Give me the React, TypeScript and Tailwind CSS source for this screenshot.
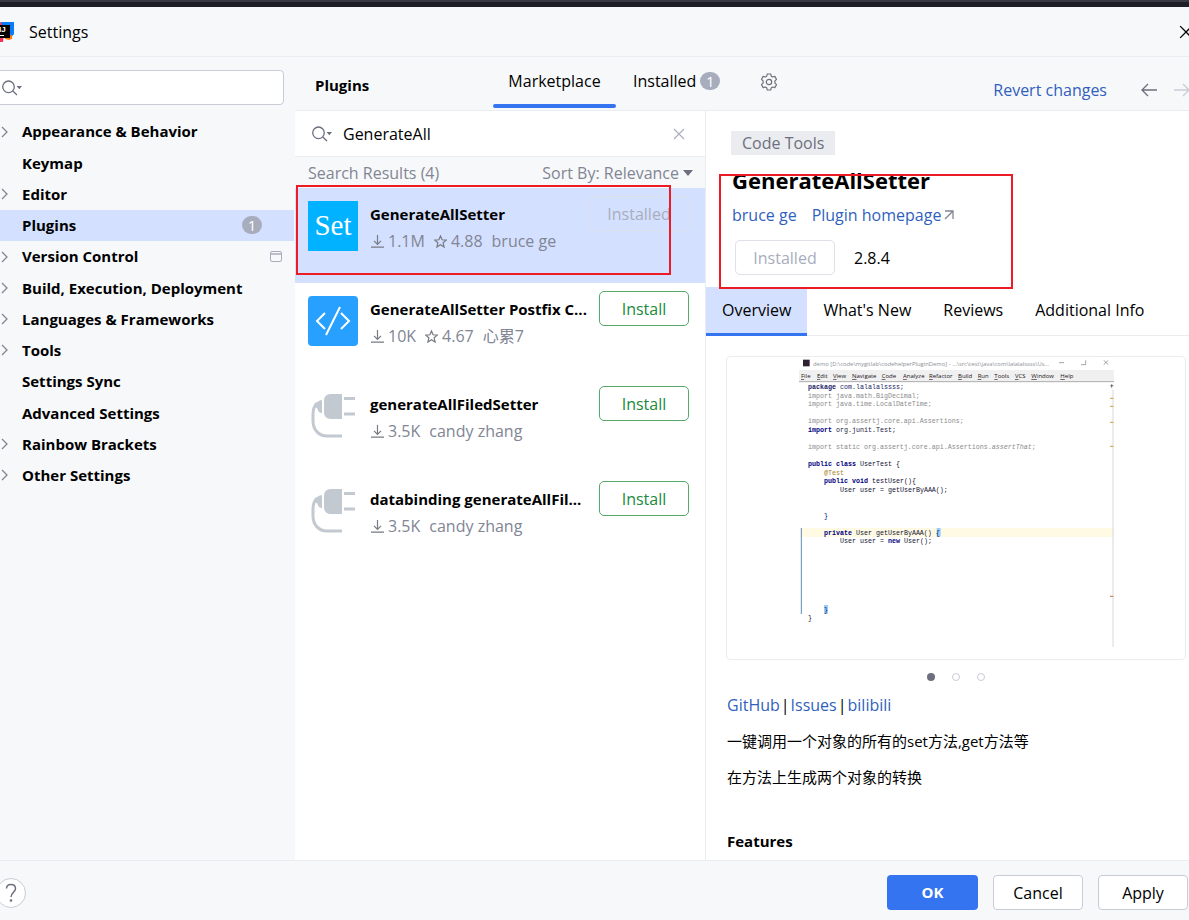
import React, { useState } from 'react';

const categories = [
  { name: 'Appearance & Behavior', expandable: true },
  { name: 'Keymap' },
  { name: 'Editor', expandable: true },
  { name: 'Plugins', badge: 1 },
  { name: 'Version Control', expandable: true, projectLevel: true },
  { name: 'Build, Execution, Deployment', expandable: true },
  { name: 'Languages & Frameworks', expandable: true },
  { name: 'Tools', expandable: true },
  { name: 'Settings Sync' },
  { name: 'Advanced Settings' },
  { name: 'Rainbow Brackets', expandable: true },
  { name: 'Other Settings', expandable: true },
];

const plugins = [
  { name: 'GenerateAllSetter', downloads: '1.1M', rating: '4.88', author: 'bruce ge', logo: 'set', installed: true },
  { name: 'GenerateAllSetter Postfix C...', downloads: '10K', rating: '4.67', author: '心累7', logo: 'code' },
  { name: 'generateAllFiledSetter', downloads: '3.5K', author: 'candy zhang', logo: 'plug' },
  { name: 'databinding generateAllFil...', downloads: '3.5K', author: 'candy zhang', logo: 'plug' },
];

const detailTabs = ['Overview', "What's New", 'Reviews', 'Additional Info'];

const SearchIcon = () => (
  <svg width="20" height="16" viewBox="0 0 20 16" fill="none" className="shrink-0">
    <circle cx="6.5" cy="6.8" r="5.8" stroke="#6c707e" strokeWidth="1.3" />
    <path d="M10.8 11 15 15" stroke="#6c707e" strokeWidth="1.3" />
    <path d="M14.5 6h5.5l-2.7 3.2z" fill="#6c707e" />
  </svg>
);

const IdeLogo = () => (
  <svg width="20" height="20" viewBox="0 0 20 20" className="-ml-[6px] shrink-0">
    <path d="M7 0h13v12l-4 5-9-8z" fill="#087cfa" />
    <path d="M0 3l7-3 3 10-1 10H5L0 16z" fill="#fe315d" />
    <path d="M11 14l7-1v4l-3 1-4-1z" fill="#f97a12" />
    <rect x="3" y="3" width="13" height="13" fill="#000" />
    <text x="5" y="10" fill="#fff" fontSize="8" fontWeight="700" fontFamily="Liberation Sans, sans-serif">IJ</text>
    <path d="M5 13.5h5" stroke="#fff" />
  </svg>
);

const GearIcon = () => (
  <svg width="18" height="18" viewBox="0 0 18 18" fill="none" stroke="#6c707e" strokeWidth="1.2" strokeLinejoin="round">
    <path d="M7.3 1h3.4l.6 2.2 1.3.8 2.2-.6 1.7 2.9-1.6 1.6v2.2l1.6 1.6-1.7 2.9-2.2-.6-1.3.8-.6 2.2H7.3l-.6-2.2-1.3-.8-2.2.6-1.7-2.9 1.6-1.6V7.9L1.5 6.3l1.7-2.9 2.2.6 1.3-.8z" />
    <circle cx="9" cy="9" r="2.7" />
  </svg>
);

const ArrowIcon = ({ forward = false }: { forward?: boolean }) => (
  <svg width="16" height="14" viewBox="0 0 16 14" fill="none" stroke={forward ? '#c9ccd6' : '#6c707e'} strokeWidth="1.3" className="shrink-0">
    <path d={forward ? 'M0 7h15M9 1l6 6-6 6' : 'M16 7H1M7 1 1 7l6 6'} />
  </svg>
);

const CrossIcon = ({ size, color }: { size: number; color: string }) => (
  <svg width={size} height={size} viewBox="0 0 12 12" fill="none" stroke={color} strokeWidth="1.1" className="shrink-0">
    <path d="M1 1l10 10M11 1 1 11" />
  </svg>
);

const DownloadIcon = () => (
  <svg width="13" height="13" viewBox="0 0 13 13" fill="none" stroke="#767a82" strokeWidth="1.2">
    <path d="M6.5 0v9M3 5.8l3.5 3.5L10 5.8M0 12.2h13" />
  </svg>
);

const StarIcon = () => (
  <svg width="13" height="13" viewBox="0 0 13 13" fill="none" stroke="#767a82" strokeWidth="1.2">
    <path d="M6.5 1l1.6 3.8 4.2.3-3.2 2.7 1 4.2-3.6-2.3L2.9 12l1-4.2L.7 5.1l4.2-.3z" />
  </svg>
);

const CountBadge = ({ count }: { count: number }) => (
  <span className="flex h-[18px] w-5 items-center justify-center rounded-full bg-[#a8adbd] text-[15px] leading-none text-white">
    {count}
  </span>
);

const PluginLogo = ({ kind }: { kind: string }) => {
  if (kind === 'set') {
    return (
      <div className="flex h-[50px] w-[50px] shrink-0 items-center justify-center bg-[#00b2ff] font-['Liberation_Serif',serif] text-[29px] text-white">
        Set
      </div>
    );
  }
  if (kind === 'code') {
    return (
      <svg width="50" height="50" viewBox="0 0 50 50" fill="none" className="shrink-0">
        <rect width="50" height="50" rx="4" fill="#28a0ff" />
        <path d="M17 17 9 25l8 8M33 17l8 8-8 8M32 11 18 39" stroke="#fff" strokeWidth="2" />
      </svg>
    );
  }
  return (
    <svg width="50" height="50" viewBox="0 0 50 50" fill="none" className="shrink-0">
      <path d="M34 3H23c-5 0-7 3-7 7v11c0 4 2 7 7 7h11z" fill="#c3c9d0" />
      <path d="M36 7.5h11M36 23h11" stroke="#c3c9d0" strokeWidth="3" />
      <path d="M14 9v13c-3 0-4-2-5-5l-3-1c1-3 4-7 8-7z" fill="#c3c9d0" />
      <path d="M9 12c-3 3-4 6-4 11v7c0 9 6 15 14 15h15" stroke="#c3c9d0" strokeWidth="3" />
    </svg>
  );
};

const menuItems = [
  ['File', 6], ['Edit', 54], ['View', 102], ['Navigate', 159], ['Code', 248], ['Analyze', 312], ['Refactor', 390],
  ['Build', 477], ['Run', 536], ['Tools', 586], ['VCS', 648], ['Window', 697], ['Help', 784],
] as const;

// Preview slide, drawn at three times its displayed size
const EditorPreview = () => (
  <svg viewBox="0 0 945 864" className="block h-auto w-[315px]" fontFamily="Liberation Mono, monospace" fontSize="20">
    <rect x="12" y="2" width="20" height="20" fill="#2e2232" />
    <text x="42" y="20" fill="#8c8f96" fontSize="17.6" fontFamily="Open Sans, sans-serif">
      demo [D:\code\mygitlab\codehelperPluginDemo] - ...\src\test\java\com\lalalalssss\Us...
    </text>
    <path d="M780 11h15M846 17h14V4M914 4l14 13M928 4l-14 13" stroke="#777" strokeWidth="2" fill="none" />
    <rect y="33" width="945" height="34" fill="#f0f0f0" />
    <path d="M0 68h945" stroke="#aaa" strokeWidth="3" />
    <g fontFamily="Open Sans, sans-serif" fontSize="18" fill="#221122">
      {menuItems.map(([label, x]) => (
        <text key={label} x={x} y="58">
          <tspan textDecoration="underline">{label[0]}</tspan>
          {label.slice(1)}
        </text>
      ))}
    </g>
    <rect y="507" x="4" width="938" height="27" fill="#fffae3" />
    <path d="M7 507v258" stroke="#5a8fbb" strokeWidth="3" />
    <rect x="413" y="507" width="12" height="26" fill="#99ccff" />
    <rect x="75" y="738" width="12" height="26" fill="#99ccff" />
    <g fill="#8c8c8c">
      <text x="27" y="90" fill="#222266"><tspan fontWeight="700">package</tspan> com.lalalalssss;</text>
      <text x="27" y="117">import java.math.BigDecimal;</text>
      <text x="27" y="142">import java.time.LocalDateTime;</text>
      <text x="27" y="193">import org.assertj.core.api.Assertions;</text>
      <text x="27" y="219" fill="#222244"><tspan fontWeight="700" fill="#000080">import</tspan> org.junit.Test;</text>
      <text x="27" y="271">import static org.assertj.core.api.Assertions.<tspan fontStyle="italic">assertThat</tspan>;</text>
      <g fill="#111133">
        <text x="27" y="322"><tspan fontWeight="700" fill="#000080">public class</tspan> UserTest {'{'}</text>
        <text x="75" y="347" fill="#a58428">@Test</text>
        <text x="75" y="373"><tspan fontWeight="700" fill="#000080">public void</tspan> testUser(){'{'}</text>
        <text x="123" y="399">User user = getUserByAAA();</text>
        <text x="75" y="476" fill="#000080">{'}'}</text>
        <text x="75" y="527"><tspan fontWeight="700" fill="#000080">private</tspan> User getUserByAAA() {'{'}</text>
        <text x="123" y="553">User user = <tspan fontWeight="700" fill="#000080">new</tspan> User();</text>
        <text x="75" y="758">{'}'}</text>
        <text x="27" y="784">{'}'}</text>
      </g>
    </g>
    <path d="M942 92v772" stroke="#d8d8d8" strokeWidth="3" />
    <path d="M933 118h10M933 142h10M933 190h10M933 262h10" stroke="#d99a2b" strokeWidth="3" />
    <path d="M933 712h10" stroke="#c46a50" strokeWidth="3" />
    <path d="M938 76v10M934 80h9" stroke="#666" strokeWidth="3" />
  </svg>
);

const Sidebar = () => {
  const [selected, setSelected] = useState('Plugins');

  return (
    <aside className="w-[295px] shrink-0 bg-[#f7f8fa] pt-[13px]">
      <label className="mr-[11px] -ml-1 flex h-[35px] items-center rounded border border-[#c9ccd6] bg-white pl-[5px]">
        <SearchIcon />
        <input aria-label="Search settings" className="min-w-0 flex-1 px-2 outline-none" />
      </label>
      <nav className="mt-[11px] mr-px grid h-[375px] auto-rows-fr text-[15px] font-bold">
        {categories.map((category) => (
          <button
            key={category.name}
            onClick={() => setSelected(category.name)}
            className={`flex items-center pr-3 text-left ${selected === category.name ? 'bg-[#d4e0ff]' : ''}`}
          >
            <span className="w-[22px] shrink-0 pl-px">
              {category.expandable && (
                <svg width="8" height="12" viewBox="0 0 8 12" fill="none" stroke="#818594" strokeWidth="1.3">
                  <path d="M1 1l5 5-5 5" />
                </svg>
              )}
            </span>
            <span className="flex-1">{category.name}</span>
            {category.badge && (
              <span className="mr-5 font-normal">
                <CountBadge count={category.badge} />
              </span>
            )}
            {category.projectLevel && (
              <svg width="12" height="11" viewBox="0 0 12 11" fill="none" stroke="#a8adbd">
                <rect x=".5" y=".5" width="11" height="10" rx="1.5" />
                <path d="M1 3h10" strokeWidth="1.5" />
              </svg>
            )}
          </button>
        ))}
      </nav>
    </aside>
  );
};

const PluginsHeader = () => (
  <div className="flex h-[54px] shrink-0 border-b border-[#ebecf0] bg-[#f7f8fa]">
    <h1 className="w-[198px] shrink-0 self-center pt-1 pl-5 text-[15px] font-bold">Plugins</h1>
    <button className="flex w-[123px] shrink-0 flex-col items-center justify-between">
      <span className="pt-3">Marketplace</span>
      <span className="mb-[2px] h-1 w-full rounded-full bg-[#3574f0]" />
    </button>
    <button className="flex h-12 items-center gap-1 pl-[17px]">
      Installed
      <CountBadge count={1} />
    </button>
    <button aria-label="Plugin settings" className="ml-10 h-[50px]">
      <GearIcon />
    </button>
    <div className="-mr-px ml-auto flex items-center pt-3">
      <a href="#" className="text-[#315fbd]">Revert changes</a>
      <button aria-label="Back" className="ml-[34px]">
        <ArrowIcon />
      </button>
      <button aria-label="Forward" className="ml-[17px]" disabled>
        <ArrowIcon forward />
      </button>
    </div>
  </div>
);

const PluginList = () => {
  const [query, setQuery] = useState('GenerateAll');

  return (
    <section className="relative w-[411px] shrink-0 border-r border-[#ebecf0] bg-white">
      <div className="flex h-[46px] items-center border-b border-[#ebecf0] pr-5 pl-[17px]">
        <SearchIcon />
        <input
          aria-label="Search plugins"
          value={query}
          onChange={(e) => setQuery(e.target.value)}
          className="ml-[11px] min-w-0 flex-1 outline-none"
        />
        <button aria-label="Clear search" onClick={() => setQuery('')}>
          <CrossIcon size={12} color="#a8adbd" />
        </button>
      </div>
      <div className="flex h-[31px] items-center justify-between bg-[#f7f8fa] pt-px pr-3 pl-[13px] text-[#818594]">
        <span>Search Results (4)</span>
        <button className="flex items-center gap-1">
          Sort By: Relevance
          <svg width="10" height="6" viewBox="0 0 10 6" fill="#6c707e">
            <path d="M0 0h10L5 6z" />
          </svg>
        </button>
      </div>
      <ul>
        {plugins.map((plugin) => (
          <li
            key={plugin.name}
            className={`flex h-[95px] items-start pr-4 pl-[13px] ${plugin.installed ? 'bg-[#d4e0ff]' : ''}`}
          >
            <div className="pt-[13px]">
              <PluginLogo kind={plugin.logo} />
            </div>
            <div className="min-w-0 flex-1 pt-[14px] pl-3">
              <div className="text-[15px] leading-6 font-bold whitespace-nowrap">{plugin.name}</div>
              <div className="mt-[3px] flex items-center pl-px leading-6 whitespace-nowrap text-[#818594]">
                <DownloadIcon />
                <span className="mr-[9px] ml-1">{plugin.downloads}</span>
                {plugin.rating && (
                  <>
                    <StarIcon />
                    <span className="mr-[9px] ml-1">{plugin.rating}</span>
                  </>
                )}
                <span>{plugin.author}</span>
              </div>
            </div>
            {plugin.installed ? (
              <button disabled className="mt-2 h-[35px] w-[100px] shrink-0 rounded-[5px] border border-[#dfe1e8] text-[#a8adbd]">
                Installed
              </button>
            ) : (
              <button className="mt-2 ml-3 h-[35px] w-[90px] shrink-0 rounded-[5px] border border-[#55a76a] bg-white text-[#208a3c]">
                Install
              </button>
            )}
          </li>
        ))}
      </ul>
      <div className="pointer-events-none absolute top-[74px] left-px h-[90px] w-[375px] border-2 border-[#ed1c24]" />
    </section>
  );
};

const PluginDetails = () => {
  const [tab, setTab] = useState('Overview');

  return (
    <section className="relative min-w-0 flex-1 bg-white pt-5">
      <div className="px-[26px]">
        <span className="-ml-px inline-flex h-6 items-center bg-[#ebecf0] px-[11px] text-[#6c707e]">Code Tools</span>
        <h2 className="mt-[9px] text-[22px] leading-8 font-bold">GenerateAllSetter</h2>
        <div className="mt-[7px] flex items-center leading-6 text-[#315fbd]">
          <a href="#">bruce ge</a>
          <a href="#" className="ml-[15px] flex items-center gap-[3px]">
            Plugin homepage
            <svg width="10" height="10" viewBox="0 0 10 10" fill="none" stroke="#818594" strokeWidth="1.3">
              <path d="M1 1h8v8M9 1 1 9" />
            </svg>
          </a>
        </div>
        <div className="mt-[13px] flex items-center pl-[3px]">
          <button disabled className="h-[35px] w-[100px] rounded-[5px] border border-[#dfe1e8] text-[#a8adbd]">
            Installed
          </button>
          <span className="ml-[19px]">2.8.4</span>
        </div>
      </div>
      <div className="mt-3 flex h-[49px] border-b border-[#ebecf0]">
        {detailTabs.map((name) => (
          <button
            key={name}
            onClick={() => setTab(name)}
            className={`-mb-px border-b-[3px] px-4 whitespace-nowrap ${tab === name ? 'border-[#3574f0] bg-[#d4e0ff]' : 'border-transparent'}`}
          >
            {name}
          </button>
        ))}
      </div>
      <div className="mt-5 mr-[3px] ml-5 flex h-[304px] items-start justify-center rounded border border-[#ebecf0] pt-[2px]">
        <EditorPreview />
      </div>
      <div className="mt-[13px] flex items-center justify-center gap-[17px] pl-4">
        <button aria-label="Slide 1" className="h-2 w-2 rounded-full bg-[#6c707e]" />
        <button aria-label="Slide 2" className="h-2 w-2 rounded-full border border-[#c9ccd6]" />
        <button aria-label="Slide 3" className="h-2 w-2 rounded-full border border-[#c9ccd6]" />
      </div>
      <div className="pt-3 pl-[21px] text-[15px] leading-6">
        <p className="flex gap-px text-base">
          <a href="#" className="text-[#315fbd]">GitHub</a>
          <span>|</span>
          <a href="#" className="text-[#315fbd]">Issues</a>
          <span>|</span>
          <a href="#" className="text-[#315fbd]">bilibili</a>
        </p>
        <p className="mt-3">一键调用一个对象的所有的set方法,get方法等</p>
        <p className="mt-3">在方法上生成两个对象的转换</p>
        <h3 className="mt-10 font-bold">Features</h3>
      </div>
      <div className="pointer-events-none absolute top-[63px] left-[13px] h-[115px] w-[294px] border-2 border-[#ed1c24]" />
    </section>
  );
};

const SettingsDialog = () => (
  <div className="flex min-h-screen flex-col overflow-hidden bg-[#f7f8fa] font-['Open_Sans','Noto_Sans_CJK_SC',sans-serif] text-base text-black">
    <div className="h-[7px] shrink-0 border-t-2 border-[#393b43] bg-[#1e1f26]" />
    <header className="flex h-[50px] shrink-0 items-center border-b border-[#ebecf0]">
      <IdeLogo />
      <span className="ml-[15px]">Settings</span>
      <button aria-label="Close" className="-mr-1 ml-auto">
        <CrossIcon size={14} color="#000" />
      </button>
    </header>
    <main className="flex flex-1">
      <Sidebar />
      <div className="flex min-w-0 flex-1 flex-col">
        <PluginsHeader />
        <div className="flex flex-1">
          <PluginList />
          <PluginDetails />
        </div>
      </div>
    </main>
    <footer className="flex h-[60px] shrink-0 items-center gap-[15px] border-t border-[#ebecf0] pt-1 pr-px">
      <button aria-label="Help" className="-ml-1 flex h-[30px] w-[30px] items-center justify-center rounded-full border border-[#c9ccd6] bg-white">
        <svg width="12" height="20" viewBox="0 0 12 20" fill="none" stroke="#6c707e" strokeWidth="1.5">
          <path d="M1.5 5.5C1.5 3 3.3 1.5 6 1.5s4.5 1.6 4.5 4c0 3.500-4.500 4-4.500 8.500" />
          <circle cx="6" cy="17.5" r=".6" />
        </svg>
      </button>
      <button className="ml-auto h-[35px] w-[91px] rounded bg-[#3574f0] text-[15px] font-bold text-white">OK</button>
      <button className="h-[35px] w-[90px] rounded border border-[#c9ccd6] bg-white">Cancel</button>
      <button className="h-[35px] w-[90px] rounded border border-[#c9ccd6] bg-white">Apply</button>
    </footer>
  </div>
);

export default function App() {
  return <SettingsDialog />;
}
